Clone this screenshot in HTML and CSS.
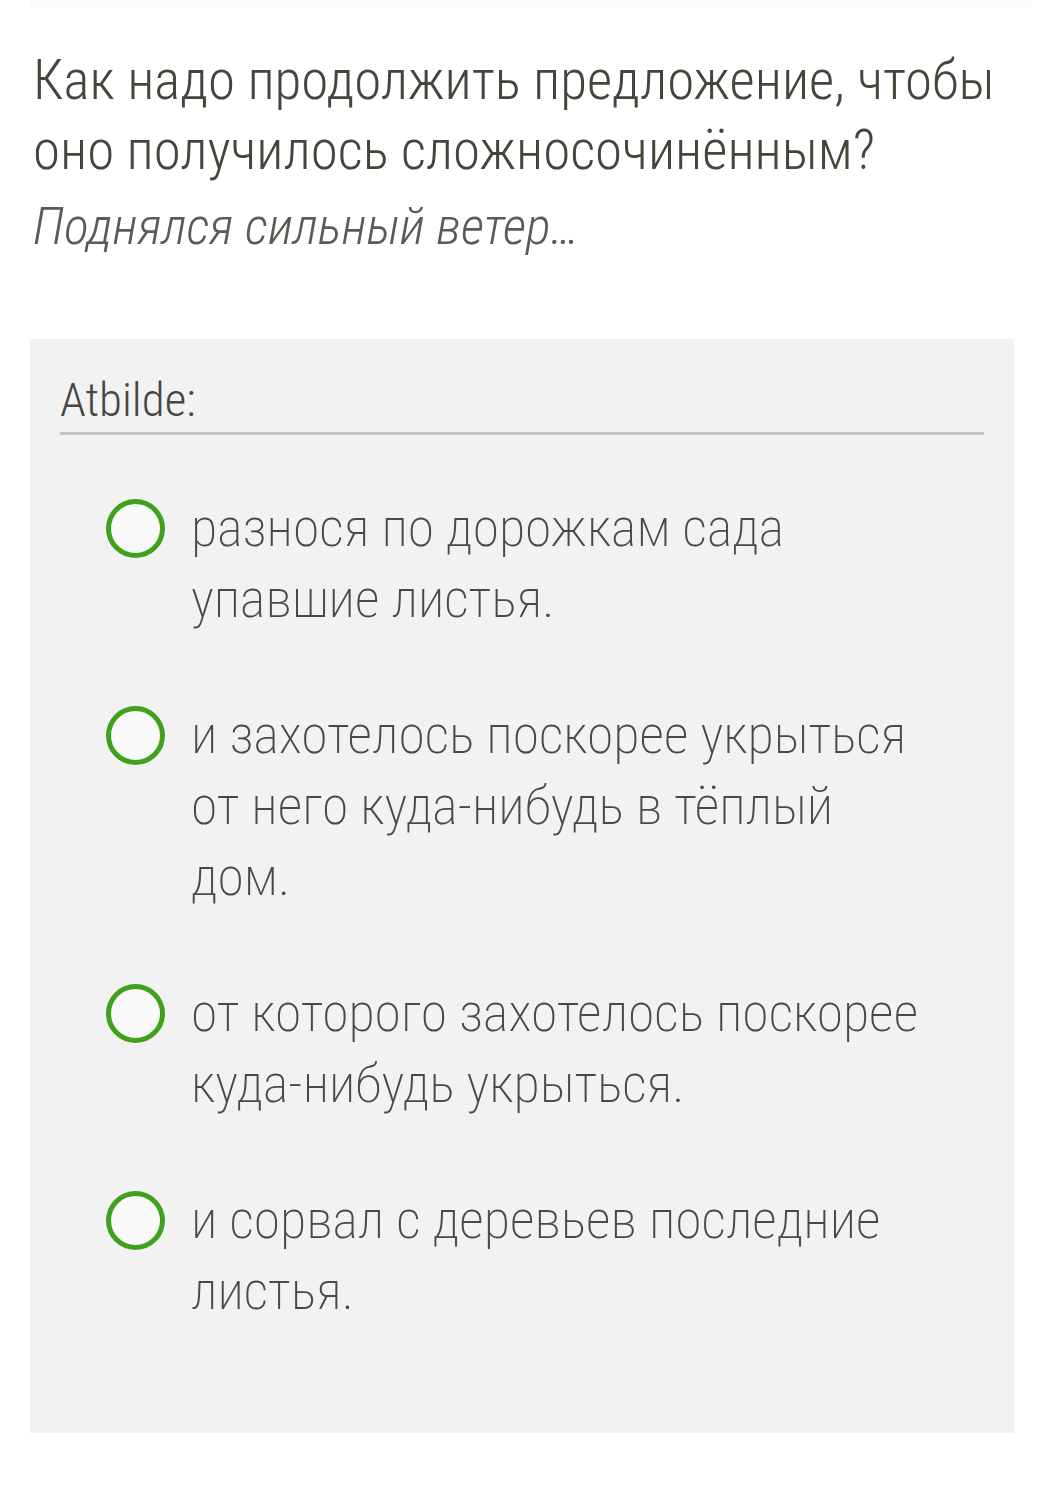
FILE: index.html
```html
<!DOCTYPE html>
<html lang="ru">
<head>
<meta charset="utf-8">
<title>Вопрос</title>
<link rel="stylesheet" href="styles.css">
</head>
<body>
<div class="topband"></div>
<div class="question">
  <h1 class="title">Как надо продолжить предложение, чтобы оно получилось сложносочинённым?</h1>
  <p class="lead">Поднялся сильный ветер…</p>
</div>
<div class="answer">
  <div class="label">Atbilde:</div>
  <ul class="options">
    <li class="option"><span class="radio"></span><span class="text">разнося по дорожкам сада упавшие листья.</span></li>
    <li class="option"><span class="radio"></span><span class="text">и захотелось поскорее укрыться от него куда-нибудь в тёплый дом.</span></li>
    <li class="option"><span class="radio"></span><span class="text">от которого захотелось поскорее куда-нибудь укрыться.</span></li>
    <li class="option"><span class="radio"></span><span class="text">и сорвал с деревьев последние листья.</span></li>
  </ul>
</div>
</body>
</html>
```
FILE: styles.css
```css
html, body {
  margin: 0;
  padding: 0;
  background: #ffffff;
}
body {
  font-family: Roboto, "Noto Sans", sans-serif;
  font-stretch: condensed;
  width: 1062px;
  height: 1497px;
  overflow: hidden;
}
.topband {
  height: 8px;
  margin: 0 30px;
  background: #fbfbfb;
}
.question {
  padding: 37px 20px 0 33px;
}
.title {
  margin: 0;
  font-size: 55px;
  font-weight: 350;
  line-height: 70px;
  color: #45453b;
}
.lead {
  margin: 7px 0 0;
  font-size: 52px;
  font-style: italic;
  font-weight: 300;
  line-height: 70px;
  color: #5b5b55;
}
.answer {
  margin: 77px 48px 0 30px;
  height: 1094px;
  background: #f2f2f2;
  padding: 0 30px;
  box-sizing: border-box;
}
.label {
  padding-top: 35px;
  padding-bottom: 6px;
  font-size: 47px;
  font-weight: 300;
  line-height: 52px;
  color: #464642;
  border-bottom: 3px solid #c2c2c2;
}
.options {
  list-style: none;
  margin: 0;
  padding: 67px 0 0 46px;
}
.option {
  display: flex;
  align-items: flex-start;
  gap: 26px;
  margin-bottom: 75px;
}
.radio {
  flex: none;
  width: 49px;
  height: 49px;
  margin-top: -3px;
  border: 5px solid #40a21c;
  border-radius: 50%;
  background: #f9f9f9;
}
.text {
  width: 740px;
  font-size: 54px;
  font-weight: 200;
  line-height: 71px;
  color: #4a4a44;
  margin-top: -10px;
}
```
